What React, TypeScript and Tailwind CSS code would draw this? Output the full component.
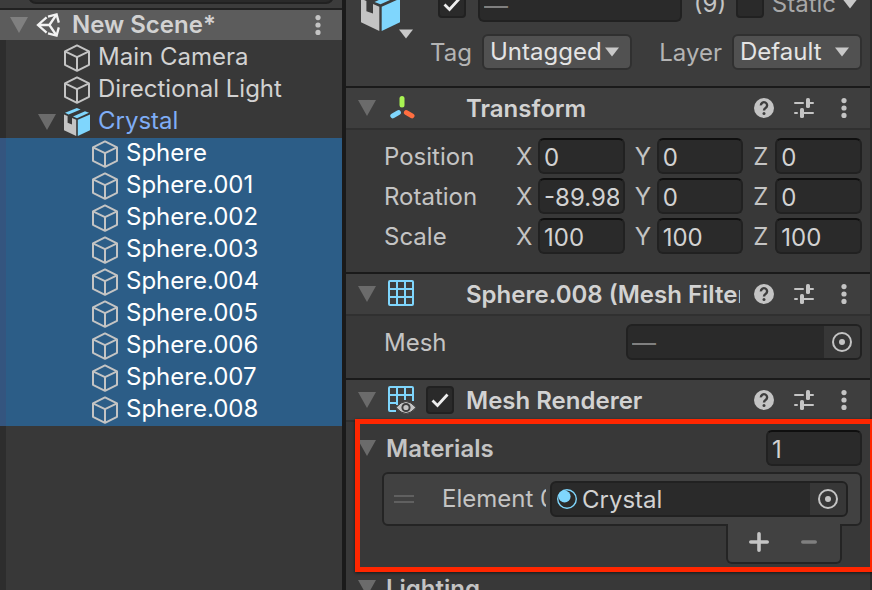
import React from "react";

type IconProps = { className?: string };

const Foldout = ({ className = "" }: IconProps) => (
  <svg viewBox="0 0 18 16" className={`h-4 w-[18px] shrink-0 ${className}`} aria-hidden="true">
    <path d="M0 0H18L9 16Z" fill="currentColor" />
  </svg>
);

const Caret = ({ className = "" }: IconProps) => (
  <svg viewBox="0 0 16 10" className={`h-2.5 w-4 shrink-0 text-[#c8c8c8] ${className}`} aria-hidden="true">
    <path d="M1 0.5H15L8 9.5Z" fill="currentColor" />
  </svg>
);

const Kebab = ({ className = "" }: IconProps) => (
  <svg viewBox="0 0 20 20" className={`size-5 shrink-0 ${className}`} aria-hidden="true">
    <g fill="currentColor">
      <circle cx="10" cy="2.6" r="2.6" />
      <circle cx="10" cy="10" r="2.6" />
      <circle cx="10" cy="17.4" r="2.6" />
    </g>
  </svg>
);

const Help = () => (
  <svg viewBox="0 0 20 20" className="size-5" aria-hidden="true">
    <circle cx="10" cy="10" r="10" fill="#c4c4c4" />
    <path d="M6.9 7.4a3.1 3.1 0 1 1 4.9 2.4c-1.2.8-1.8 1.3-1.8 2.6" fill="none" stroke="#3e3e3e" strokeWidth="2.4" />
    <circle cx="10" cy="15.4" r="1.5" fill="#3e3e3e" />
  </svg>
);

const Presets = () => (
  <svg viewBox="0 0 20 20" className="size-5" aria-hidden="true">
    <g fill="#c4c4c4">
      <rect x="0" y="4" width="10" height="2" rx="1" />
      <rect x="14" y="4" width="6" height="2" rx="1" />
      <rect x="12" y="0" width="4" height="10" rx="1.6" />
      <rect x="0" y="14" width="4" height="2" rx="1" />
      <rect x="8" y="14" width="12" height="2" rx="1" />
      <rect x="6" y="10" width="4" height="10" rx="1.6" />
    </g>
  </svg>
);

const Cube = () => (
  <svg viewBox="0 0 26 28" className="h-7 w-[26px] shrink-0" fill="none" stroke="#c4c4c4" strokeWidth="2" strokeLinejoin="round" aria-hidden="true">
    <path d="M13 1.4L25 7.4V20.8L13 26.8L1 20.8V7.4Z" />
    <path d="M1 7.4L13 13.2L25 7.4M13 13.2V26.8" />
  </svg>
);

const Prefab = ({ className = "" }: IconProps) => (
  <svg viewBox="0 0 26 28" className={`shrink-0 ${className}`} aria-hidden="true">
    <path d="M0 6.4L3.6 8V14.8L8 16.4V10L12.2 11.8V28L0 22.2Z" fill="#c4c4c4" />
    <path d="M13.8 11.8L26 6.4V22.2L13.8 28Z" fill="#7fd6fd" />
    <path d="M1 4.8L12.8 0L16.6 1.4L4.6 6.6Z" fill="#7fd6fd" />
    <path d="M9 8.6L21 3.2L25 4.8L13 10.2Z" fill="#7fd6fd" />
  </svg>
);

const UnityLogo = () => (
  <svg viewBox="0 0 24 24" className="size-6 shrink-0" fill="none" stroke="#f2f2f2" strokeWidth="2.3" strokeLinejoin="miter" aria-hidden="true">
    <path d="M12 3.6L20.6 1.5L22.8 9.6M22.8 14.4L20.6 22.5L12 20.4" />
    <path d="M10.6 4.4L2 12L10.6 19.6M3 12H13.4L20.2 2M13.4 12L20.2 22" />
  </svg>
);

const TransformIcon = () => (
  <svg viewBox="0 0 28 28" className="size-7" strokeWidth="5" strokeLinecap="round" aria-hidden="true">
    <path d="M14 4.6V11" stroke="#a9f453" />
    <path d="M10.4 18.6L4.8 21.8" stroke="#7fd6fd" />
    <path d="M18.4 18.6L24 21.8" stroke="#ff6e40" />
  </svg>
);

const MeshFilterIcon = () => (
  <svg viewBox="0 0 28 28" className="size-7" fill="none" stroke="#7fd6fd" strokeWidth="2" aria-hidden="true">
    <rect x="1" y="1" width="24" height="24" rx="1" />
    <path d="M9 1V25M17 1V25M1 9H25M1 17H25" />
  </svg>
);

const MeshRendererIcon = () => (
  <svg viewBox="0 0 28 28" className="size-7 overflow-visible" aria-hidden="true">
    <g fill="none" stroke="#7fd6fd" strokeWidth="2">
      <path d="M8 25H2Q1 25 1 24V2Q1 1 2 1H24Q25 1 25 2V15" />
      <path d="M9 1V18M17 1V14M1 9H25M1 17H10M9 17V19" />
    </g>
    <path d="M8 21.5Q18 9.5 28 21.5Q18 33.5 8 21.5Z" fill="#c4c4c4" stroke="#3e3e3e" strokeWidth="1" />
    <circle cx="18" cy="21.5" r="3.6" fill="none" stroke="#3e3e3e" strokeWidth="2" />
  </svg>
);

const Material = () => (
  <svg viewBox="0 0 20 20" className="size-5 shrink-0" aria-hidden="true">
    <circle cx="10" cy="10" r="9.3" fill="none" stroke="#7fd6fd" strokeWidth="1.4" />
    <circle cx="7.6" cy="7.6" r="6" fill="#7fd6fd" />
  </svg>
);

const Picker = ({ label }: { label: string }) => (
  <button aria-label={label} className="grid w-9 shrink-0 place-items-center rounded-r-sm bg-[#373737]">
    <svg viewBox="0 0 20 20" className="size-5" aria-hidden="true">
      <circle cx="10" cy="10" r="9" fill="none" stroke="#c4c4c4" strokeWidth="2" />
      <circle cx="10" cy="10" r="3" fill="#c4c4c4" />
    </svg>
  </button>
);

const field = "h-9 min-w-0 rounded-md border-2 border-[#212121] border-t-[#0f0f0f] bg-[#2a2a2a] px-1 pt-0.5 outline-none";

const Checkbox = ({ label, on }: { label: string; on?: boolean }) => (
  <span className="grid size-7 shrink-0 place-items-center">
    <input
      type="checkbox"
      aria-label={label}
      defaultChecked={on}
      className="peer size-7 appearance-none rounded border-2 border-[#212121] bg-[#2a2a2a] [grid-area:1/1]"
    />
    <svg viewBox="0 0 28 28" className="pointer-events-none invisible size-7 [grid-area:1/1] peer-checked:visible" aria-hidden="true">
      <path d="M6.5 14.5L11.5 19.5L21.5 8.5" fill="none" stroke="#eeeeee" strokeWidth="2.8" />
    </svg>
  </span>
);

const Dropdown = ({ id, value, className }: { id: string; value: string; className: string }) => (
  <span className={`grid items-center ${className}`}>
    <select id={id} className="h-9 w-full appearance-none rounded-md border-2 border-[#303030] bg-[#515151] pr-6 pl-1.5 text-[#e4e4e4] outline-none [grid-area:1/1]">
      <option>{value}</option>
    </select>
    <Caret className="pointer-events-none mr-3 justify-self-end [grid-area:1/1]" />
  </span>
);

const ComponentBar = ({ title, icon, toggle }: { title: string; icon: React.ReactNode; toggle?: boolean }) => (
  <header className="flex h-11 items-center border-t-2 border-b-2 border-t-[#1a1a1a] border-b-[#303030] bg-[#3e3e3e] pr-4 pl-3 text-[#c4c4c4]">
    <Foldout className="text-[#6b6b6b]" />
    <span className="ml-3 w-7 shrink-0">{icon}</span>
    <span className="mr-3 ml-2.5 w-7 shrink-0">{toggle && <Checkbox label={`${title} enabled`} on />}</span>
    <h2 className="mr-3.5 min-w-0 flex-1 overflow-hidden pt-0.5 font-semibold whitespace-nowrap text-[#d2d2d2]">{title}</h2>
    <div className="flex gap-5">
      <button aria-label="Help"><Help /></button>
      <button aria-label="Presets"><Presets /></button>
      <button aria-label="More"><Kebab /></button>
    </div>
  </header>
);

const vectors = [
  { name: "Position", values: ["0", "0", "0"] },
  { name: "Rotation", values: ["-89.98", "0", "0"] },
  { name: "Scale", values: ["100", "100", "100"] },
];

const spheres = ["Sphere", "Sphere.001", "Sphere.002", "Sphere.003", "Sphere.004", "Sphere.005", "Sphere.006", "Sphere.007", "Sphere.008"];

const Hierarchy = () => (
  <aside className="flex w-[346px] shrink-0 flex-col border-r-4 border-[#1a1a1a] bg-[#383838]">
    <div className="h-2.5 shrink-0 overflow-hidden border-b-2 border-[#212121] bg-[#3c3c3c] pr-2 pl-7">
      <input aria-label="Search" className="-mt-8 block h-9 w-full rounded-lg border-2 border-[#212121] bg-[#2a2a2a]" />
    </div>
    <div className="flex h-[30px] shrink-0 items-center bg-[#5c5c5c] pr-3.5 pl-2.5 text-[#d2d2d2]">
      <Foldout className="text-[#808080]" />
      <span className="mr-3 ml-2"><UnityLogo /></span>
      <h1 className="flex-1 font-semibold">New Scene*</h1>
      <button aria-label="Scene menu"><Kebab className="text-[#c4c4c4]" /></button>
    </div>
    <ul className="flex-1 border-l-6 border-[#2d2d2d] pt-0.5 text-[#d2d2d2]">
      <li className="flex h-8 items-center gap-2 pl-[58px]"><Cube /><span className="pb-0.5">Main Camera</span></li>
      <li className="flex h-8 items-center gap-2 pl-[58px]"><Cube /><span className="pb-0.5">Directional Light</span></li>
      <li>
        <div className="flex h-8 items-center gap-2 pl-8 text-[#7fadf5]">
          <Foldout className="text-[#6b6b6b]" />
          <Prefab className="h-7 w-[26px]" />
          <span className="pb-0.5">Crystal</span>
        </div>
        <ul className="-ml-1.5 border-l-6 border-[#34557f] bg-[#2c5d87] text-white">
          {spheres.map((s) => (
            <li key={s} className="flex h-8 items-center gap-2 pl-[86px]"><Cube /><span className="pb-0.5">{s}</span></li>
          ))}
        </ul>
      </li>
    </ul>
  </aside>
);

const ObjectHeader = () => (
  <div className="flex h-[86px] shrink-0 items-end bg-[#3c3c3c] pr-2 pb-4">
    <div className="flex h-[84px] w-[84px] shrink-0 items-start pt-[3px] pl-[15px]">
      <Prefab className="h-[42px] w-[39px]" />
      <Caret className="mt-10 -ml-0.5" />
    </div>
    <div className="flex min-w-0 flex-1 flex-col gap-3">
      <div className="flex items-center pl-2 text-[#c4c4c4]">
        <Checkbox label="Active" on />
        <input aria-label="Name" defaultValue="—" className={`${field} ml-3 flex-1 text-[#808080]`} />
        <span className="ml-3 w-[42px]">(9)</span>
        <Checkbox label="Static" />
        <span className="ml-2 text-[#a8a8a8]">Static</span>
        <button aria-label="Static flags" className="mr-1 ml-1.5"><Caret /></button>
      </div>
      <div className="flex items-center text-[#b4b4b4]">
        <label htmlFor="tag" className="w-[52px] pt-0.5 pr-2.5 text-right">Tag</label>
        <Dropdown id="tag" value="Untagged" className="flex-1" />
        <label htmlFor="layer" className="w-[100px] pt-0.5 pr-2.5 text-right">Layer</label>
        <Dropdown id="layer" value="Default" className="w-[130px]" />
      </div>
    </div>
  </div>
);

const Inspector = () => (
  <main className="flex min-w-0 flex-1 flex-col overflow-hidden bg-[#2b2b2b] pr-0.5 text-[#c4c4c4]">
    <ObjectHeader />

    <div className="flex-1 bg-[#383838]">
      <section>
        <ComponentBar title="Transform" icon={<TransformIcon />} />
        <div className="flex flex-col gap-1 pt-2 pr-2 pb-[18px] pl-[38px]">
          {vectors.map((v) => (
            <div key={v.name} className="flex items-center gap-2.5">
              <span className="-mr-2.5 w-[132px] shrink-0 pt-0.5">{v.name}</span>
              {["X", "Y", "Z"].map((axis, i) => (
                <label key={axis} className="flex min-w-0 flex-1 items-center">
                  <span className="w-[22px] shrink-0 pt-0.5">{axis}</span>
                  <input aria-label={`${v.name} ${axis}`} defaultValue={v.values[i]} className={`${field} w-full text-[#d2d2d2]`} />
                </label>
              ))}
            </div>
          ))}
        </div>
      </section>

      <section>
        <ComponentBar title="Sphere.008 (Mesh Filter)" icon={<MeshFilterIcon />} />
        <div className="flex items-center pt-2 pr-2 pb-[18px] pl-[38px]">
          <label htmlFor="mesh" className="w-[242px] shrink-0 pt-0.5">Mesh</label>
          <div className="flex h-9 min-w-0 flex-1 rounded-md border-2 border-[#212121] bg-[#2a2a2a]">
            <input id="mesh" defaultValue="—" className="min-w-0 flex-1 px-1 pt-0.5 text-[#808080] outline-none" />
            <Picker label="Select mesh" />
          </div>
        </div>
      </section>

      <section>
        <ComponentBar title="Mesh Renderer" icon={<MeshRendererIcon />} toggle />
        <div className="relative pt-2 pr-2 pb-1.5">
          <div className="flex items-center pl-3">
            <Foldout className="text-[#6b6b6b]" />
            <label htmlFor="count" className="ml-2.5 flex-1 pt-0.5 font-semibold">Materials</label>
            <input id="count" defaultValue="1" className={`${field} w-24 text-[#d2d2d2]`} />
          </div>
          <div className="mt-1.5 ml-9 flex h-[54px] items-center rounded-md border-2 border-[#242424] bg-[#414141] pr-3 pl-2.5">
            <span className="flex h-2 w-5 shrink-0 flex-col justify-between" aria-hidden="true">
              <span className="h-0.5 bg-[#606060]" />
              <span className="h-0.5 bg-[#606060]" />
            </span>
            <label htmlFor="element" className="mr-1 ml-7 w-[104px] shrink-0 overflow-hidden whitespace-nowrap">Element 0</label>
            <div className="flex h-9 min-w-0 flex-1 items-center rounded-md border-2 border-[#212121] bg-[#2a2a2a] pl-[5px]">
              <Material />
              <input id="element" defaultValue="Crystal" className="ml-[5px] min-w-0 flex-1 pt-0.5 text-[#d2d2d2] outline-none" />
              <span className="flex self-stretch"><Picker label="Select material" /></span>
            </div>
          </div>
          <div className="relative -mt-0.5 mr-5 ml-auto flex h-10 w-29 items-center rounded-b-md border-2 border-t-0 border-[#242424] bg-[#414141] pb-0.5 pl-[21px]">
            <button aria-label="Add" className="w-[26px]">
              <svg viewBox="0 0 20 20" className="size-5" aria-hidden="true">
                <path d="M10 1.8V18.2M1.8 10H18.2" stroke="#c4c4c4" strokeWidth="3.6" strokeLinecap="round" />
              </svg>
            </button>
            <button aria-label="Remove" className="ml-6">
              <svg viewBox="0 0 20 20" className="size-5" aria-hidden="true">
                <path d="M3.8 10H16.2" stroke="#7f7f7f" strokeWidth="3.6" strokeLinecap="round" />
              </svg>
            </button>
          </div>
          <div className="pointer-events-none absolute -top-[3px] -right-[5px] -bottom-0.5 left-[9px] border-5 border-[#ff2600] shadow-[0_1px_3px_rgba(0,0,0,0.6)]" />
        </div>
        <div className="flex h-9 items-center gap-2.5 pl-3">
          <Foldout className="text-[#6b6b6b]" />
          <h3 className="pt-0.5 font-semibold">Lighting</h3>
        </div>
      </section>
    </div>
  </main>
);

export default function App() {
  return (
    <div className="flex h-screen overflow-hidden bg-[#383838] font-[Inter,sans-serif] text-2xl leading-8">
      <Hierarchy />
      <Inspector />
    </div>
  );
}
